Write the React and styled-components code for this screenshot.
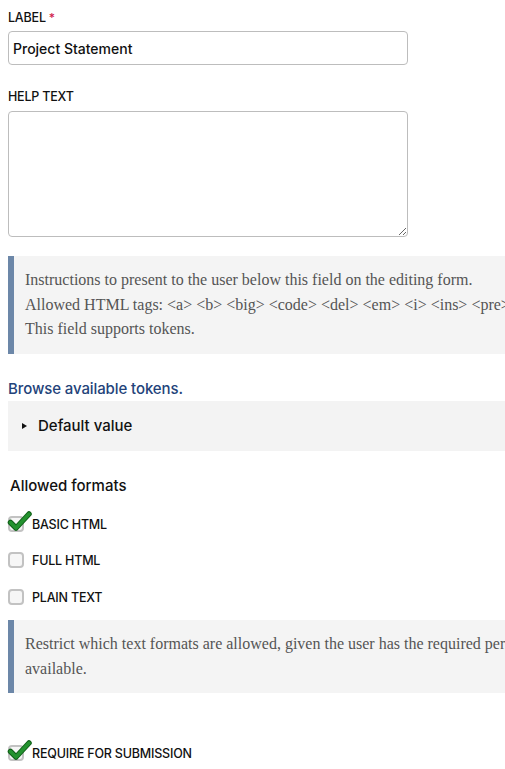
import React from "react";
import styled, { createGlobalStyle } from "styled-components";

const GlobalStyle = createGlobalStyle`
  html, body {
    margin: 0;
    padding: 0;
    background: #fff;
    overflow: hidden;
  }
  body {
    font-family: Inter, "Liberation Sans", sans-serif;
    color: #111;
  }
`;

const Page = styled.div`
  width: 900px;
  padding: 9px 0 0 8px;
`;

const FieldLabel = styled.label`
  display: block;
  font-size: 12.5px;
  font-weight: 500;
  line-height: 18px;
  text-transform: uppercase;
  letter-spacing: -0.2px;
  color: #111;
  margin-bottom: ${(p) => p.$gap || 4}px;
`;

const Required = styled.span`
  color: #d0224d;
  margin-left: 3px;
  font-size: 12px;
`;

const TextInput = styled.input`
  display: block;
  box-sizing: border-box;
  width: 400px;
  height: 34px;
  border: 1px solid #bdbdbd;
  border-radius: 4px;
  padding: 0 4px;
  font-family: Inter, "Liberation Sans", sans-serif;
  font-size: 14px;
  font-weight: 500;
  color: #111;
  margin-bottom: 23px;
  outline: none;
`;

const TextArea = styled.textarea`
  display: block;
  box-sizing: border-box;
  width: 400px;
  height: 126px;
  border: 1px solid #bdbdbd;
  border-radius: 4px;
  padding: 4px;
  margin: 0;
  font-family: Inter, "Liberation Sans", sans-serif;
  outline: none;
`;

const Description = styled.div`
  box-sizing: border-box;
  width: 700px;
  margin-top: ${(p) => p.$top}px;
  background: #f4f4f4;
  border-left: 6px solid #6c87a8;
  padding: 12px 0 12px 11px;
  font-family: "Liberation Serif", serif;
  font-size: 16px;
  line-height: 24.5px;
  color: #555;
  white-space: nowrap;
`;

const TokenLink = styled.a`
  display: block;
  margin-top: 23px;
  font-size: 15px;
  font-weight: 500;
  line-height: 24px;
  color: #23437a;
  text-decoration: none;
  letter-spacing: -0.1px;
`;

const Details = styled.div`
  width: 620px;
  height: 50px;
  background: #f3f3f3;
  display: flex;
  align-items: center;
  gap: 10px;
  padding-left: 14px;
  box-sizing: border-box;
`;

const Triangle = styled.span`
  width: 0;
  height: 0;
  border-top: 3px solid transparent;
  border-bottom: 3px solid transparent;
  border-left: 5px solid #111;
  margin-right: 1px;
`;

const SummaryText = styled.span`
  font-size: 15px;
  font-weight: 500;
  color: #111;
`;

const Legend = styled.div`
  margin-top: 24px;
  padding-left: 2px;
  font-size: 15px;
  font-weight: 500;
  line-height: 22px;
  color: #111;
  margin-bottom: 9px;
`;

const CheckRow = styled.div`
  display: flex;
  align-items: center;
  gap: 8px;
  height: 36.5px;
  margin-top: ${(p) => p.$top || 0}px;
`;

const CheckLabel = styled.span`
  font-size: 12.5px;
  font-weight: 500;
  text-transform: uppercase;
  letter-spacing: -0.2px;
  color: #111;
  padding-top: 1px;
`;

const Box = styled.span`
  position: relative;
  display: inline-block;
  box-sizing: border-box;
  width: 16px;
  height: 16px;
  border: 2px solid #c2c2c2;
  border-radius: 4px;
  background: #f6f6f6;
`;

const Tick = styled.svg`
  position: absolute;
  left: -1px;
  top: -7px;
  overflow: visible;
`;

const Checkbox = ({ checked }) => (
  <Box>
    {checked && (
      <Tick width="22" height="20" viewBox="0 0 22 20">
        <path
          d="M1.5 11.5 L7 17 L20 3"
          fill="none"
          stroke="#0f5f17"
          strokeWidth="5.5"
          strokeLinecap="round"
          strokeLinejoin="round"
        />
        <path
          d="M1.5 11.5 L7 17 L20 3"
          fill="none"
          stroke="#24922f"
          strokeWidth="3.5"
          strokeLinecap="round"
          strokeLinejoin="round"
        />
      </Tick>
    )}
  </Box>
);

const formats = [
  { name: "Basic HTML", checked: true },
  { name: "Full HTML", checked: false },
  { name: "Plain text", checked: false },
];

export default function App() {
  return (
    <Page>
      <GlobalStyle />
      <FieldLabel>
        Label<Required>*</Required>
      </FieldLabel>
      <TextInput defaultValue="Project Statement" readOnly />

      <FieldLabel $gap={5}>Help text</FieldLabel>
      <TextArea readOnly />

      <Description $top={19}>
        Instructions to present to the user below this field on the editing form.
        <br />
        Allowed HTML tags: &lt;a&gt; &lt;b&gt; &lt;big&gt; &lt;code&gt; &lt;del&gt; &lt;em&gt; &lt;i&gt; &lt;ins&gt; &lt;pre&gt; &lt;q&gt; &lt;small&gt; &lt;span&gt; &lt;strong&gt;
        <br />
        This field supports tokens.
      </Description>

      <TokenLink href="#">Browse available tokens.</TokenLink>
      <Details>
        <Triangle />
        <SummaryText>Default value</SummaryText>
      </Details>

      <Legend>Allowed formats</Legend>
      {formats.map((f) => (
        <CheckRow key={f.name}>
          <Checkbox checked={f.checked} />
          <CheckLabel>{f.name}</CheckLabel>
        </CheckRow>
      ))}

      <Description $top={5}>
        Restrict which text formats are allowed, given the user has the required permissions. If no text formats are selected, then all the formats will be
        <br />
        available.
      </Description>

      <CheckRow $top={42}>
        <Checkbox checked />
        <CheckLabel>Require for submission</CheckLabel>
      </CheckRow>
    </Page>
  );
}
